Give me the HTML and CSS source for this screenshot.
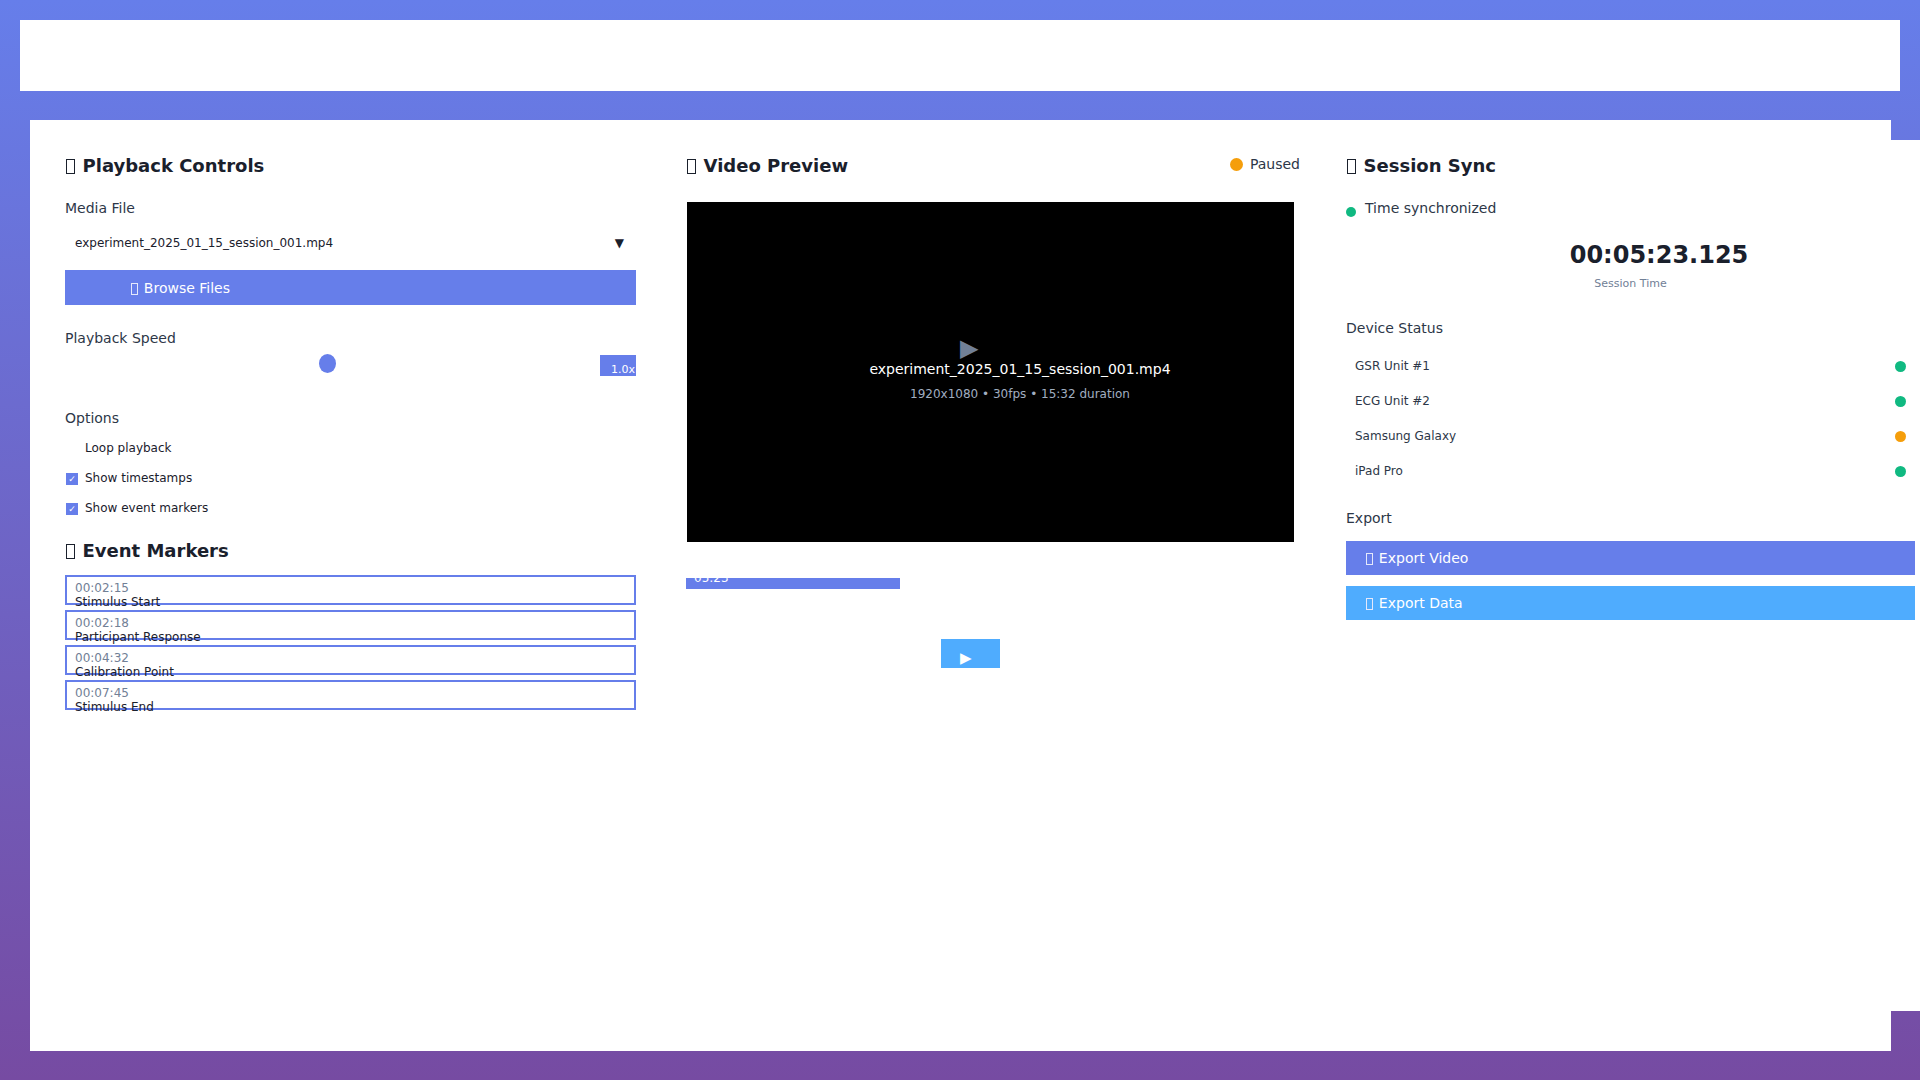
FILE: index.html
```html
<!DOCTYPE html>
<html lang="en">
<head>
<meta charset="utf-8">
<title>Session Playback</title>
<link rel="stylesheet" href="styles.css">
</head>
<body>
<header class="app-header"></header>
<main class="workspace">
  <section class="panel panel-left">
    <h2 class="panel-title"><span class="ico">🎮</span>Playback Controls</h2>
    <div class="field-label label-media">Media File</div>
    <div class="select"><span class="select-text">experiment_2025_01_15_session_001.mp4</span><span class="select-arrow">▼</span></div>
    <button class="btn btn-browse"><span class="ico">📁</span>Browse Files</button>
    <div class="field-label label-speed">Playback Speed</div>
    <div class="speed-row">
      <input class="speed-range" type="range" min="0" max="2" step="0.25" value="1">
      <span class="speed-value">1.0x</span>
    </div>
    <div class="field-label label-options">Options</div>
    <div class="options">
      <div class="option"><span class="check"></span>Loop playback</div>
      <div class="option"><span class="check checked">✓</span>Show timestamps</div>
      <div class="option"><span class="check checked">✓</span>Show event markers</div>
    </div>
    <h2 class="panel-title title-markers"><span class="ico">📍</span>Event Markers</h2>
    <ul class="markers">
      <li class="marker"><span class="marker-time">00:02:15</span><span class="marker-label">Stimulus Start</span></li>
      <li class="marker"><span class="marker-time">00:02:18</span><span class="marker-label">Participant Response</span></li>
      <li class="marker"><span class="marker-time">00:04:32</span><span class="marker-label">Calibration Point</span></li>
      <li class="marker"><span class="marker-time">00:07:45</span><span class="marker-label">Stimulus End</span></li>
    </ul>
  </section>

  <section class="panel panel-mid">
    <div class="preview-head">
      <h2 class="panel-title"><span class="ico">🎬</span>Video Preview</h2>
      <div class="status"><span class="dot dot-warn status-dot"></span>Paused</div>
    </div>
    <div class="video">
      <div class="video-overlay">
        <div class="video-play">▶</div>
        <div class="video-name">experiment_2025_01_15_session_001.mp4</div>
        <div class="video-meta">1920x1080 • 30fps • 15:32 duration</div>
      </div>
    </div>
    <div class="timeline">
      <div class="timeline-fill" style="width:35%"><span class="timeline-time">05:23</span></div>
    </div>
    <div class="controls"><button class="btn-play">▶</button></div>
  </section>

  <section class="panel panel-right">
    <h2 class="panel-title"><span class="ico">🔄</span>Session Sync</h2>
    <div class="sync-status"><span class="dot dot-ok sync-dot"></span>Time synchronized</div>
    <div class="clock">00:05:23.125</div>
    <div class="clock-label">Session Time</div>
    <div class="field-label label-devices">Device Status</div>
    <ul class="devices">
      <li class="device"><span>GSR Unit #1</span><span class="dot dot-ok device-dot"></span></li>
      <li class="device"><span>ECG Unit #2</span><span class="dot dot-ok device-dot"></span></li>
      <li class="device"><span>Samsung Galaxy</span><span class="dot dot-warn device-dot"></span></li>
      <li class="device"><span>iPad Pro</span><span class="dot dot-ok device-dot"></span></li>
    </ul>
    <div class="field-label label-export">Export</div>
    <button class="btn btn-export"><span class="ico">📹</span>Export Video</button>
    <button class="btn btn-export btn-export-data"><span class="ico">📊</span>Export Data</button>
  </section>
</main>
</body>
</html>
```
FILE: styles.css
```css
html {
  height: 100%;
  overflow: hidden;
}

body {
  margin: 0;
  padding: 20px;
  min-height: 100vh;
  box-sizing: border-box;
  background: linear-gradient(180deg, #667eea 0%, #764ba2 100%);
  font-family: "DejaVu Sans", "Noto Sans", sans-serif;
  color: #2d3748;
}

.app-header {
  height: 71px;
  background: #ffffff;
}

.workspace {
  margin: 29px 9px 0 10px;
  height: 931px;
  box-sizing: border-box;
  padding: 20px;
  background: #ffffff;
  display: grid;
  grid-template-columns: 601px 640px 599px;
  column-gap: 20px;
  align-items: start;
}

.panel {
  height: 871px;
  box-sizing: border-box;
  padding: 15px;
  background: #ffffff;
}

/* missing-glyph style icon box (emoji kept as text, hidden inside) */
.ico {
  display: inline-block;
  box-sizing: border-box;
  font-size: 0.3em;
  width: 1.733em;
  height: 2.767em;
  margin: 0 1.333em 0 1px;
  border: 1px solid #1a202c;
  overflow: hidden;
  color: transparent;
  line-height: 2.5em;
  text-align: center;
  vertical-align: -0.4em;
}

.btn .ico {
  border-color: #e4e8fb;
}

.panel-title {
  margin: 0;
  font-size: 18px;
  line-height: 22px;
  font-weight: bold;
  color: #1a202c;
}

.field-label {
  font-size: 14px;
  line-height: 17px;
  color: #2d3748;
}

/* ---------- left panel ---------- */
.label-media { margin-top: 23px; }

.select {
  margin-top: 11px;
  height: 30px;
  box-sizing: border-box;
  padding: 0 12px 0 10px;
  display: flex;
  align-items: center;
  justify-content: space-between;
  font-size: 12px;
  color: #1a202c;
}

.select-arrow {
  font-size: 12px;
}

.btn {
  display: block;
  width: 100%;
  border: none;
  margin: 0;
  font-family: inherit;
  text-align: left;
  color: #ffffff;
  cursor: pointer;
}

.btn-browse {
  margin-top: 12px;
  height: 35px;
  padding: 0 0 0 65px;
  font-size: 14px;
  line-height: 36px;
  background: #667eea;
}

.label-speed { margin-top: 25px; }

.speed-row {
  margin-top: 7px;
  display: flex;
  align-items: flex-start;
  gap: 10px;
}

.speed-range {
  -webkit-appearance: none;
  appearance: none;
  flex: 1;
  min-width: 0;
  height: 19px;
  margin: 0;
  background: transparent;
}

.speed-range::-webkit-slider-runnable-track {
  height: 19px;
  background: transparent;
  border: none;
}

.speed-range::-webkit-slider-thumb {
  -webkit-appearance: none;
  appearance: none;
  width: 17px;
  height: 19px;
  border-radius: 50%;
  background: #667eea;
  border: none;
}

.speed-value {
  margin-top: 1px;
  width: 36px;
  height: 21px;
  box-sizing: border-box;
  padding: 8px 0 0 11px;
  background: #667eea;
  color: #ffffff;
  font-size: 11px;
  line-height: 13px;
  white-space: nowrap;
  overflow: hidden;
}

.label-options { margin-top: 34px; }

.options {
  margin-top: 14px;
  display: flex;
  flex-direction: column;
  gap: 15px;
}

.option {
  display: flex;
  align-items: center;
  font-size: 12px;
  line-height: 15px;
  color: #1a202c;
}

.check {
  width: 12px;
  height: 12px;
  margin: 0 7px 0 1px;
  display: flex;
  align-items: center;
  justify-content: center;
  font-size: 9px;
  line-height: 12px;
  color: #ffffff;
}

.check.checked {
  background: #667eea;
}

.title-markers { margin-top: 24px; }

.markers {
  list-style: none;
  margin: 13px 0 0;
  padding: 0;
  display: flex;
  flex-direction: column;
  gap: 5px;
}

.marker {
  height: 30px;
  box-sizing: border-box;
  border: 2px solid #667eea;
  padding: 4px 8px;
  font-size: 12px;
  line-height: 14px;
  display: flex;
  flex-direction: column;
}

.marker-time { color: #718096; }
.marker-label { color: #1a202c; }

/* ---------- middle panel ---------- */
.preview-head {
  display: flex;
  align-items: center;
  justify-content: space-between;
}

.status {
  display: flex;
  align-items: center;
  font-size: 14px;
  line-height: 17px;
  color: #2d3748;
  margin: -3px -4px 0 0;
}

.dot {
  display: inline-block;
  border-radius: 50%;
  flex: none;
}

.dot-ok { background: #10b981; }
.dot-warn { background: #f59e0b; }

.status-dot {
  width: 13px;
  height: 13px;
  margin-right: 7px;
}

.video {
  position: relative;
  margin: 25px 0 0 1px;
  width: 607px;
  height: 340px;
  background: #000000;
}

.video-overlay {
  position: absolute;
  top: 0;
  left: 59px;
  right: 0;
  bottom: 0;
  padding-top: 134px;
  text-align: center;
}

.video-play {
  text-align: left;
  padding-left: 214px;
  font-size: 24px;
  line-height: 24px;
  color: #718096;
}

.video-name {
  margin-top: 1px;
  font-size: 14px;
  line-height: 17px;
  color: #ffffff;
}

.video-meta {
  margin-top: 9px;
  font-size: 12px;
  line-height: 15px;
  color: #a0aec0;
}

.timeline {
  margin-top: 36px;
  height: 11px;
}

.timeline-fill {
  display: flow-root;
  height: 100%;
  background: #667eea;
}

.timeline-time {
  display: block;
  margin-top: -7px;
  padding-left: 8px;
  font-size: 12px;
  line-height: 14px;
  color: #ffffff;
}

.controls {
  margin-top: 50px;
  padding-left: 255px;
}

.btn-play {
  display: block;
  width: 59px;
  height: 29px;
  box-sizing: border-box;
  border: none;
  margin: 0;
  padding: 10px 0 0 19px;
  background: #4facfe;
  color: #ffffff;
  font-family: inherit;
  font-size: 15px;
  line-height: 17px;
  text-align: left;
}

/* ---------- right panel ---------- */
.sync-status {
  margin-top: 23px;
  display: flex;
  align-items: center;
  font-size: 14px;
  line-height: 17px;
  color: #2d3748;
}

.sync-dot {
  width: 10px;
  height: 10px;
  margin: 6px 9px 0 0;
}

.clock {
  margin-top: 24px;
  padding-left: 57px;
  text-align: center;
  font-size: 24px;
  line-height: 29px;
  font-weight: bold;
  color: #1a202c;
}

.clock-label {
  margin-top: 7px;
  text-align: center;
  font-size: 11px;
  line-height: 13px;
  color: #718096;
}

.label-devices { margin-top: 30px; }

.devices {
  list-style: none;
  margin: 12px 0 0;
  padding: 0;
}

.device {
  display: flex;
  align-items: center;
  justify-content: space-between;
  padding: 10px 9px;
  font-size: 12px;
  line-height: 15px;
  color: #2d3748;
}

.device-dot {
  width: 11px;
  height: 11px;
}

.label-export { margin-top: 21px; }

.btn-export {
  margin-top: 14px;
  height: 34px;
  padding: 0 0 0 19px;
  font-size: 14px;
  line-height: 34px;
  background: #667eea;
}

.btn-export-data {
  margin-top: 11px;
  background: #4facfe;
}
```
